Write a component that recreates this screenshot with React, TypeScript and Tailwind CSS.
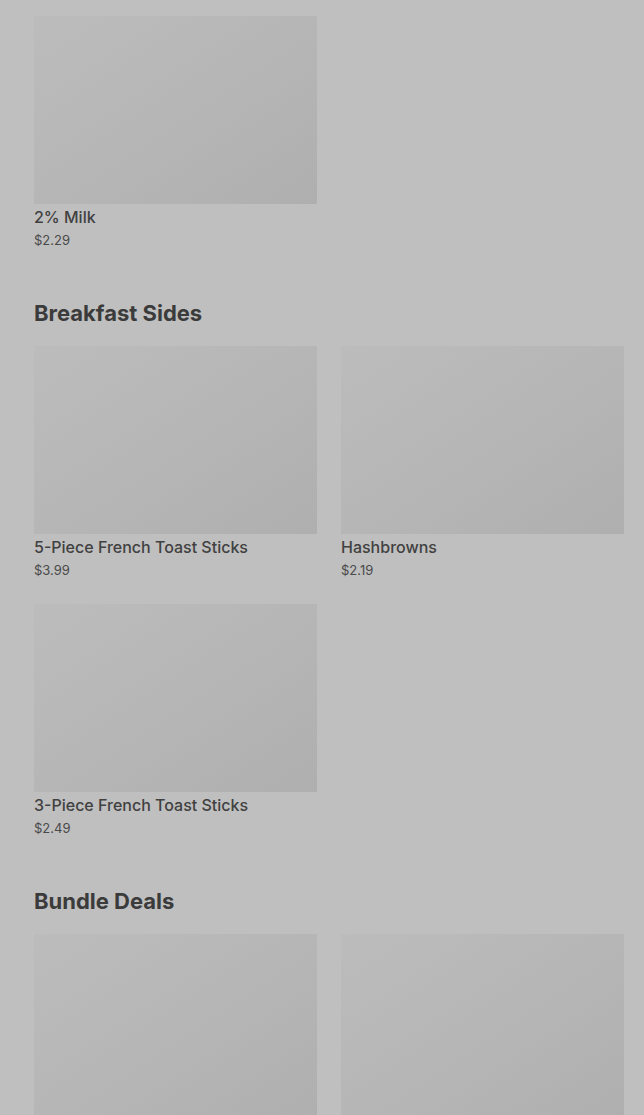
type Item = { name?: string; price?: string };

const SECTIONS: { title?: string; items: Item[] }[] = [
  { items: [{ name: "2% Milk", price: "$2.29" }] },
  {
    title: "Breakfast Sides",
    items: [
      { name: "5-Piece French Toast Sticks", price: "$3.99" },
      { name: "Hashbrowns", price: "$2.19" },
      { name: "3-Piece French Toast Sticks", price: "$2.49" },
    ],
  },
  {
    // item names sit below the fold in the reference
    title: "Bundle Deals",
    items: [{}, {}],
  },
];

function ItemCard({ name, price }: Item) {
  return (
    <div className="flex flex-col">
      <div className="h-[188px] w-full bg-gradient-to-br from-[#bcbcbc] via-[#b6b6b6] to-[#afafaf]" />
      {name && (
        <p className="mt-px text-[16px] font-medium leading-6 text-[#414141]">{name}</p>
      )}
      {price && (
        <p className="mt-px text-[13px] leading-5 text-[#4a4a4a]">{price}</p>
      )}
    </div>
  );
}

export default function App() {
  return (
    <div
      className="h-[1115px] overflow-hidden bg-[#bfbfbf] pl-[34px] pr-[20px] pt-4"
      style={{ fontFamily: "Inter, 'Liberation Sans', sans-serif" }}
    >
      {SECTIONS.map((section, idx) => (
        <section key={idx} className={idx > 0 ? "mt-[49px]" : ""}>
          {section.title && (
            <h2 className="mb-[19px] text-[22px] font-bold leading-7 text-[#3b3b3b]">
              {section.title}
            </h2>
          )}
          <div className="grid grid-cols-2 gap-6">
            {section.items.map((item, i) => (
              <ItemCard key={i} name={item.name} price={item.price} />
            ))}
          </div>
        </section>
      ))}
    </div>
  );
}
